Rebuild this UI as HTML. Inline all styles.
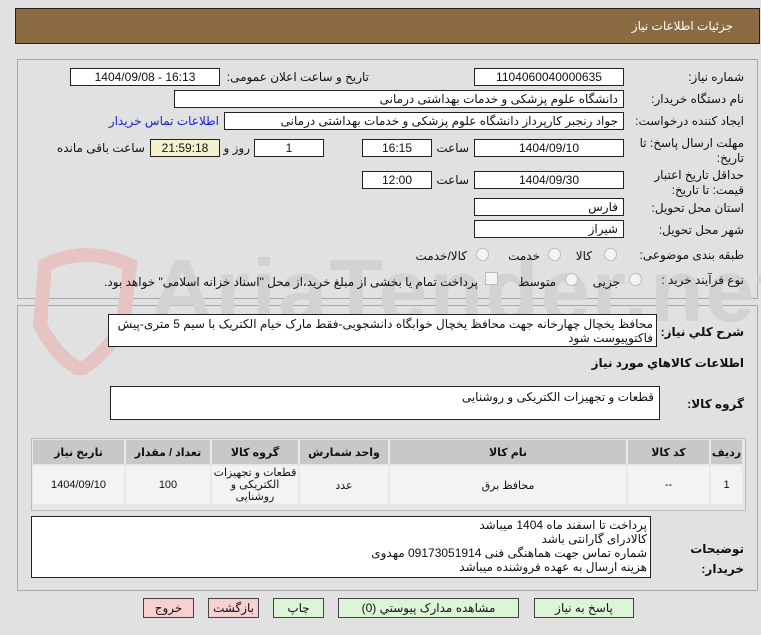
<!DOCTYPE html><html><head><meta charset="utf-8"><style>
body{margin:0;width:761px;height:635px;background:#e1e1e1;font-family:"Liberation Sans","DejaVu Sans",sans-serif;font-size:12px;color:#111;position:relative;overflow:hidden}
.a{position:absolute}
.hd{left:15px;top:8px;width:743px;height:34px;background:#8b6c42;border:1px solid #222;}
.hd span{position:absolute;right:26px;top:10px;color:#fff;font-size:12px}
.pn{border:1px solid #a8a8a8;}
.bx{position:absolute;background:#fff;border:1px solid #222;line-height:16px;text-align:center;font-size:12px;box-sizing:border-box;height:18px}
.r{text-align:right;padding-right:5px;direction:rtl}
.l{position:absolute;direction:rtl;text-align:right;white-space:nowrap;font-size:12px}
.rad{position:absolute;width:11px;height:11px;border-radius:50%;border:1px solid #bbb;background:#f4f4f4}
table{border-collapse:separate;border-spacing:2px;font-size:11px;table-layout:fixed}
th{background:#c8c8c8;height:24px;font-weight:bold;padding:0}
td{background:#f3f3f3;text-align:center;height:38px;padding:0}
.btn{position:absolute;top:598px;height:18px;border:1px solid #444;background:#dcf5d6;text-align:center;line-height:18px;font-size:12px}
</style></head><body dir="ltr">
<div class="a hd"><span>جزئیات اطلاعات نیاز</span></div>
<div class="a pn" style="left:17px;top:59px;width:739px;height:238px"></div>
<div class="a pn" style="left:17px;top:305px;width:739px;height:284px"></div>
<svg class="a" style="left:15px;top:245px" width="140" height="130"><path d="M30 20 Q70 0 115 20 L108 80 Q90 110 65 125 Q40 110 25 80 Z" fill="none" stroke="#e6c4c4" stroke-width="14"/></svg>
<div class="a" style="left:150px;top:240px;font-size:88px;font-weight:bold;color:#d2d2d2;letter-spacing:2px">AriaTender.net</div>

<div class="l" style="right:17px;top:70px">شماره نیاز:</div>
<div class="bx" style="left:474px;top:68px;width:150px">1104060040000635</div>
<div class="l" style="right:392px;top:70px">تاریخ و ساعت اعلان عمومی:</div>
<div class="bx" style="left:70px;top:68px;width:150px">1404/09/08 - 16:13</div>

<div class="l" style="right:17px;top:92px">نام دستگاه خریدار:</div>
<div class="bx r" style="left:174px;top:90px;width:450px">دانشگاه علوم پزشکی و خدمات بهداشتی درمانی</div>

<div class="l" style="right:17px;top:114px">ایجاد کننده درخواست:</div>
<div class="bx r" style="left:224px;top:112px;width:400px">جواد رنجبر کارپرداز دانشگاه علوم پزشکی و خدمات بهداشتی درمانی</div>
<div class="l" style="right:542px;top:114px;color:#1a1ae0">اطلاعات تماس خریدار</div>

<div class="l" style="right:17px;top:136px;line-height:15px">مهلت ارسال پاسخ: تا<br>تاریخ:</div>
<div class="bx" style="left:474px;top:139px;width:150px">1404/09/10</div>
<div class="l" style="right:292px;top:141px">ساعت</div>
<div class="bx" style="left:362px;top:139px;width:70px">16:15</div>
<div class="bx" style="left:254px;top:139px;width:70px">1</div>
<div class="l" style="right:511px;top:141px">روز و</div>
<div class="bx" style="left:150px;top:139px;width:70px;background:#f4f2cc">21:59:18</div>
<div class="l" style="right:616px;top:141px">ساعت باقی مانده</div>

<div class="l" style="right:17px;top:168px;line-height:15px">حداقل تاریخ اعتبار<br>قیمت: تا تاریخ:</div>
<div class="bx" style="left:474px;top:171px;width:150px">1404/09/30</div>
<div class="l" style="right:292px;top:173px">ساعت</div>
<div class="bx" style="left:362px;top:171px;width:70px">12:00</div>

<div class="l" style="right:17px;top:201px">استان محل تحویل:</div>
<div class="bx r" style="left:474px;top:198px;width:150px">فارس</div>
<div class="l" style="right:17px;top:223px">شهر محل تحویل:</div>
<div class="bx r" style="left:474px;top:220px;width:150px">شیراز</div>

<div class="l" style="right:17px;top:248px">طبقه بندی موضوعی:</div>
<div class="rad" style="left:604px;top:248px"></div><div class="l" style="right:169px;top:249px">کالا</div>
<div class="rad" style="left:548px;top:248px"></div><div class="l" style="right:221px;top:249px">خدمت</div>
<div class="rad" style="left:476px;top:248px"></div><div class="l" style="right:294px;top:249px">کالا/خدمت</div>

<div class="l" style="right:17px;top:273px">نوع فرآیند خرید :</div>
<div class="rad" style="left:629px;top:273px"></div><div class="l" style="right:141px;top:275px">جزیی</div>
<div class="rad" style="left:565px;top:273px"></div><div class="l" style="right:205px;top:275px">متوسط</div>
<div class="a" style="left:485px;top:272px;width:11px;height:11px;border:1px solid #bbb;background:#f4f4f4"></div>
<div class="l" style="right:283px;top:275px">پرداخت تمام یا بخشی از مبلغ خرید،از محل "اسناد خزانه اسلامی" خواهد بود.</div>

<div class="l" style="right:17px;top:325px;font-weight:bold">شرح کلي نياز:</div>
<div class="a" style="left:108px;top:314px;width:549px;height:33px;background:#fff;border:1px solid #222;box-sizing:border-box;direction:rtl;text-align:right;padding:2px 3px;font-size:12px;line-height:14px">محافظ یخچال چهارخانه جهت محافظ یخچال خوابگاه دانشجویی-فقط مارک خیام الکتریک با سیم 5 متری-پیش فاکتوپیوست شود</div>
<div class="l" style="right:17px;top:356px;font-weight:bold">اطلاعات کالاهاي مورد نياز</div>
<div class="l" style="right:17px;top:397px;font-weight:bold">گروه کالا:</div>
<div class="a" style="left:110px;top:386px;width:550px;height:34px;background:#fff;border:1px solid #222;box-sizing:border-box;direction:rtl;text-align:right;padding:3px 5px;font-size:12px">قطعات و تجهیزات الکتریکی و روشنایی</div>

<div class="a" style="left:31px;top:438px;width:713px;height:71px;border:1px solid #bbb;background:#e8e8e8;overflow:hidden">
<table dir="ltr" style="width:713px;margin:-1px 0 0 -1px">
<colgroup><col style="width:91px"><col style="width:84px"><col style="width:86px"><col style="width:88px"><col style="width:236px"><col style="width:81px"><col></colgroup>
<tr><th>تاریخ نیاز</th><th>تعداد / مقدار</th><th>گروه کالا</th><th>واحد شمارش</th><th>نام کالا</th><th>کد کالا</th><th>ردیف</th></tr>
<tr><td>1404/09/10</td><td>100</td><td style="line-height:12px;font-size:11px">قطعات و تجهیزات الکتریکی و روشنایی</td><td>عدد</td><td>محافظ برق</td><td>--</td><td>1</td></tr>
</table></div>

<div class="l" style="right:17px;top:539px;font-weight:bold;line-height:20px">توضیحات<br>خریدار:</div>
<div class="a" style="left:31px;top:516px;width:620px;height:62px;background:#fff;border:1px solid #222;box-sizing:border-box;direction:rtl;text-align:right;padding:1px 3px;font-size:12px;line-height:14px">پرداخت تا اسفند ماه 1404 میباشد<br>کالادرای گارانتی باشد<br>شماره تماس جهت هماهنگی فنی 09173051914 مهدوی<br>هزینه ارسال به  عهده فروشنده میباشد</div>

<div class="btn" style="left:534px;width:98px">پاسخ به نیاز</div>
<div class="btn" style="left:338px;width:179px">مشاهده مدارک پیوستي (0)</div>
<div class="btn" style="left:273px;width:49px">چاپ</div>
<div class="btn" style="left:208px;width:49px;background:#f8d0d0">بازگشت</div>
<div class="btn" style="left:143px;width:49px;background:#f8d0d0">خروج</div>
</body></html>
